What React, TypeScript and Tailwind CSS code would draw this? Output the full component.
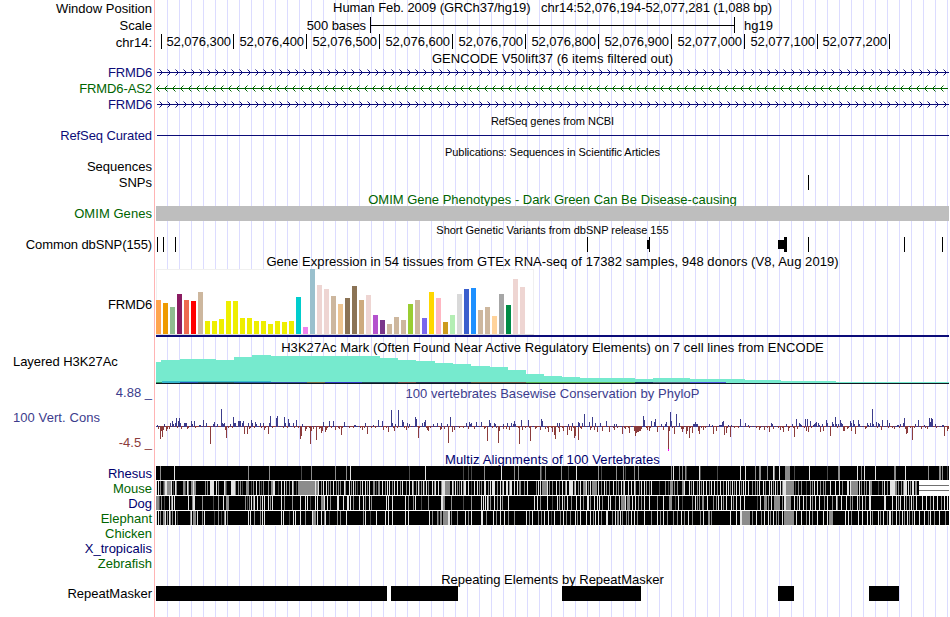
import React from "react";
import clsx from "clsx";

const TRACK_WIDTH = 793;

const ticks = [5, 77, 150, 223, 296, 369, 442, 515, 588, 661, 733];

const positions = [
  "52,076,300", "52,076,400", "52,076,500", "52,076,600", "52,076,700",
  "52,076,800", "52,076,900", "52,077,000", "52,077,100", "52,077,200"
];

// [height, color] per tissue
const tissues: [number, string][] = [
  [34, "#ffa54f"], [31, "#ee9a00"], [27, "#8fbc8f"], [40, "#8b1c62"], [34, "#ee6a50"],
  [33, "#ff0000"], [42, "#cdb79e"], [13, "#eeee00"], [13, "#eeee00"], [15, "#eeee00"],
  [33, "#eeee00"], [33, "#eeee00"], [16, "#eeee00"], [16, "#eeee00"], [13, "#eeee00"],
  [13, "#eeee00"], [10, "#eeee00"], [13, "#eeee00"], [12, "#eeee00"], [13, "#eeee00"],
  [37, "#00cdcd"], [7, "#ee82ee"], [65, "#9ac0cd"], [49, "#eed5d2"], [45, "#eed5d2"],
  [38, "#cdb79e"], [30, "#eec591"], [36, "#8b7355"], [48, "#8b7355"], [34, "#cdaa7d"],
  [39, "#eed5d2"], [19, "#b452cd"], [14, "#7a378b"], [10, "#cdb79e"], [17, "#cdb79e"],
  [14, "#cdb79e"], [30, "#9acd32"], [34, "#cdb79e"], [16, "#7a67ee"], [42, "#ffd700"],
  [36, "#ffb6c1"], [12, "#cd9b1d"], [19, "#b4eeb4"], [40, "#d9d9d9"], [45, "#3a5fcd"],
  [46, "#1e90ff"], [24, "#cdb79e"], [27, "#cdb79e"], [18, "#ffd39b"], [40, "#a6a6a6"],
  [29, "#008b45"], [55, "#eed5d2"], [47, "#eed5d2"]
];

// [x, y] start of every step in the H3K27Ac signal
const histone = [
  [0, 7], [5, 5], [24, 4], [60, 5], [78, 2], [96, 0], [115, 1], [224, 3], [242, 5],
  [260, 6], [279, 8], [297, 9], [315, 11], [334, 12], [352, 15], [370, 19], [388, 21],
  [406, 22], [424, 23], [479, 24], [497, 23], [534, 24], [589, 25], [625, 26], [680, 27]
];

// x:height, height above the zero line
const gains =
  "1:2 8:3 14:4 16:6 17:3 19:4 20:9 22:6 23:9 24:4 28:4 29:4 30:4 35:6 36:3 38:6 43:2 44:2 47:7 50:4 57:3 58:5 61:3 65:18 66:4 67:3 68:4 74:3 77:10 78:4 79:4 82:6 83:6 84:6 86:4 87:6 92:4 95:7 96:4 99:5 100:3 104:4 107:4 113:4 114:11 120:9 121:11 128:10 129:4 132:8 133:4 137:4 140:7 146:3 167:5 173:6 177:6 188:5 198:2 199:2 209:4 217:2 222:7 226:6 235:17 236:4 239:3 242:17 246:7 247:5 251:4 253:3 259:10 260:8 " +
  "266:4 268:5 269:7 277:3 281:4 285:4 291:3 294:10 310:4 313:5 314:3 315:4 320:5 325:5 333:7 334:4 338:4 339:3 347:3 351:4 355:4 357:3 358:6 359:3 365:7 372:7 385:8 386:6 401:4 403:4 412:3 416:4 422:5 423:4 426:4 428:13 433:5 436:10 439:4 444:4 450:6 458:3 460:3 487:11 488:7 495:6 498:5 499:8 505:3 509:3 510:5 514:15 515:6 520:13 523:4 " +
  "537:3 538:3 539:5 540:3 541:3 553:3 556:2 563:2 564:2 565:2 566:5 567:6 572:2 575:2 584:8 589:4 592:2 615:4 616:3 630:3 636:3 640:8 643:4 644:3 645:2 649:8 651:8 654:6 657:2 658:3 659:4 660:5 662:4 663:2 666:3 670:7 671:4 676:5 677:3 679:10 680:3 682:3 684:7 685:4 686:3 694:6 695:4 697:7 698:3 702:7 703:3 711:4 712:2 714:4 716:18 717:3 720:5 722:4 723:3 726:7 731:7 733:4 741:2 742:2 744:3 747:4 748:9 759:3 762:7 768:2 773:9 774:5 775:9 776:8 779:3 786:2 787:2";

const losses =
  "2:3 4:13 5:5 6:11 7:4 10:5 11:3 13:3 25:3 31:3 54:18 69:4 70:12 88:8 91:8 93:3 108:4 112:8 144:13 145:10 149:5 150:3 154:18 155:5 157:3 160:14 163:3 165:7 166:5 169:6 170:4 179:4 183:3 185:9 206:4 211:8 227:4 232:6 238:5 250:4 262:12 " +
  "271:4 272:5 284:4 285:3 288:3 292:17 296:6 298:4 312:3 318:3 328:3 331:15 342:17 343:5 347:3 350:3 353:4 363:18 366:4 374:15 379:3 384:4 389:3 392:6 396:6 398:9 399:13 403:6 407:5 411:9 413:4 415:5 418:12 419:10 422:14 425:3 434:4 438:4 441:6 446:5 453:6 458:4 466:8 469:3 473:7 478:5 479:10 480:7 481:6 482:6 483:5 484:5 485:3 491:4 493:5 501:6 507:4 512:24 513:5 518:8 " +
  "525:3 526:6 527:3 530:8 531:5 533:12 536:7 542:5 543:8 547:4 557:8 560:5 568:9 570:7 574:11 603:4 608:4 613:6 617:3 624:4 627:6 632:5 638:11 641:3 650:5 652:6 664:6 667:5 674:10 687:5 688:5 691:3 695:5 699:8 709:3 725:4 738:3 749:3 750:8 751:7 756:14 765:3 771:3 788:10 791:5 792:3";

// x, shade (w = light, g = gray, d = dark gray) and an optional width
const alignments = [
  "4g 18w 92g 113g 145d 155g 179g 190g 194w 253d 269w 307d 312d 315d 328g 345w 358g 362g 384g 385d 389g 405g 412d 420w 442g 445d 460g 467g 469d 478g 482g 515g 517w 523g 526g 529g 530d 543w 544d 561d 584w 589w 599g 603g2 611g 617w 618g 623w 629g 630g4 638d 653w 671d 682g 683g 701w 705g 708w 719w 738g 739g 749w 772g 783g2 786g 791d",
  "0w 2w 4g 7d 8g 9w2 11g 12g3 15w 17d 19w 20g 27g2 29d 31w 32g 35g2 37w 38g2 49g 51g 54w4 60w 62g 68w 69g 70d 75w4 79g 82g 84g 86d 90g3 95d 97g 100w 103g 105d 107g 112g 115g2 117w2 122d 125w 128w 130g 133g 136w 137g 140d 142g20 159w 162w 165g 167w 170w 172g 174g 177w 180g 182g 184g 188w 189g 193w 195g 197w 199g 201d 204g 206w 209w 211g 213w 217g2 220d 222g2 226w 229g 231w 233w 236g 238w 241w 244g 246w 250g 253w 256w 257g 260g 262w " +
    "263d 265g 267w 268d 270w 272g 276w 278g 279w 282w 285g 286w3 289g5 296w 297g 299w 301g 303g 305w 307g 308w2 312w 315d 318w 321w 323g 325g 328w2 332g 334w 336w3 341g 344w 346g 347w 350w2 353g 354w2 358w 361w 363g2 368g 371w 380g 382w 384w 386g5 391w 393g 396g 400w 403g 406w 409g 410w 413w4 418g 419w 422g 424w 427g3 430w 432g 434w 436g5 442w 445g 448w 450g 453g 457w 460g 462g 465w 467g 468w 472w 475w 478w 479g 483g 485w 488w 490g 493g 495w 503d 509g 512d 514g3 518g 521g " +
    "526g2 528w 533w 535g 537w 541g 543w 545g 547w 550w 553g 555w 558w 561g 564w 567g 570w 572w 574g 576w 578g 580w 583w 585g 587w 589w 592w 596g 599g 601g 603w 607w 609g 613w 615w 617g 619w 621g 624w 626g 627w3 630g8 639d 642g 645g 650d 654g 656g 658w 661w 664g 667g 669g 674w 679w 683w 686g 691w2 694w 695g7 703w 705g 708g 710g 713w 714g2 722d 726g 728w 731g 734w2 736w3 739g2 742g 745g 747g 748w3 752w 754g 756w2 759g2",
  "0g3 3d 5g 8d 13w 15g 16w 18w 32w 36g 37w2 46g 57d 62g 67w 70g3 89g 91d 93g 95w 97g 98w 101w 104g 106w 108w 112w 114g 116w 125w 128g 136g 144w 149w 151w 154d 159w 161w 165g3 168w 171w 174g 181w 182w 187w 191w2 194w 197g 203w 207w 209g 213w 215g 230w 232w 236w 249w 252g 257g 259w " +
    "265d 272g 285w2 287g2 295g 307d 315g 325w 327w 329w 331w 332g 334g 338w 341g 344w 346g 352w 378w 381w 384g 391w 396d 401w 403g 406w 408g 411w 415g 420w 424w 427g 431w2 434g 438w 441w 443w 446g 452w 454w 459g 463w 465g4 469w 471g3 476w 479w 482g 485g 488w 493w 501g 507w 513g3 519d 522w " +
    "526d 536g 539w 541g 543g 546g2 551w 557g 560g 562w 565w 567g 570w 575w 577g 580w 584w 588w 601d 604w 608g3 612g 615w 618g6 626g 628w3 630g5 638w 641g 643w 647w 650g 654w 656g 659w 663w 668g 671w 676g 680w 681g 685w 690w 694g 696g 701w 703g 706w 709g 713w 714w 728w2 736w 740w 742g 744w 748w 750g 753g 755w 757g 760w 766w 770w 774g 777w 781w 785g 788w 791w",
  "0w 2w 4g 7g2 9w 11g 13w 14g 16g 19w 21d 34g 35w 37g3 41w 46g 48w 58d 62g 65d 68g 69w 71g 92w 94w 98g 104g 106w 108w 125w 127w 133d 137w 139w 144w 149g 156w 157g3 161w 165w 168g 169w 173d 181g 184g 190w 207g 209w 214d 220w 229w 232w 236w 249w 252w " +
    "273w 276g 281g 282d 284g2 287g5 292w2 295g 301g 309w 312g 315w 325w 326w 330g 337w 340g 344w 348w 352g 358g 370w 373g 376w 382g 385g 388w 392w 395d 398w 404g 407w 410g 414g 419w 421g 424w 430w 434w 437g 439w 442w 445g 450w2 456g 459w 461g2 464w 466g 470g 472g 475w 478w 481g 488w 495g 501w 504g 507w 511g 517g 521g " +
    "525w 528g 532w 536g 544g 547w 552g2 555g 574w 580w 584w2 586g8 596g 600w 605g 608w 612w 614g 617w 620g 622g 626w 628g3 631g7 640w 645w 650g 653w 656g 661w 667w 671w 673g3 676g 689w 692w 695g 702w 706w 711w 714w 716g 722w 724g 727w 731g 733w2 736g 740w 743g 746w 748g 751w 753g 756g 758w 763w 768w 772g 774w 778g 783w 789g"
];

const shades: Record<string, string> = { w: "#e4e4e4", g: "#8c8c8c", d: "#484848" };

function parseBars(data: string) {
  const bars = new Map<number, number>();
  data.split(" ").forEach((item) => {
    const [x, h] = item.split(":").map(Number);
    bars.set(x, h);
  });
  return bars;
}

function Label({ className, children }: { className?: string; children?: React.ReactNode }) {
  return (
    <div className={clsx("shrink-0 flex items-center justify-end", className)}>
      <span>{children}</span>
    </div>
  );
}

function Title({ className, children }: { className?: string; children?: React.ReactNode }) {
  return (
    <div className={clsx("shrink-0 flex items-center justify-center", className)}>
      <span>{children}</span>
    </div>
  );
}

function Intron({ left = false }: { left?: boolean }) {
  const color = left ? "#006400" : "#0c0c78";
  const arrows = Array.from({ length: 99 }, (_, i) =>
    left ? `M${i * 8 + 3.5} 5.5l-3 3l3 3` : `M${i * 8 + 3.5} 5.5l3 3l-3 3`
  ).join("");

  return (
    <svg width={TRACK_WIDTH} height={16} className="block shrink-0">
      <rect x={left ? 0 : 1} y={8} width={792} height={1} fill={color} />
      <path d={arrows} fill="none" stroke={color} strokeWidth={1} />
    </svg>
  );
}

function Expression() {
  return (
    <svg width={TRACK_WIDTH} height={68} className="block shrink-0" shapeRendering="crispEdges">
      <rect width={378} height={66} fill="#f0f0f0" />
      <rect x={1} y={1} width={376} height={64} fill="#fff" />
      <rect y={65} width={378} height={1} fill="#dcdcdc" />
      {tissues.map(([h, color], i) => (
        <rect key={i} x={i * 7} y={65 - h} width={5} height={h} fill={color} />
      ))}
      <rect y={66} width={TRACK_WIDTH} height={2} fill="#0c0c78" />
    </svg>
  );
}

function Histone() {
  const d = histone
    .map(([x, y], i) => `${i === 0 ? `M0 28V${y}` : `V${y}`}H${histone[i + 1]?.[0] ?? TRACK_WIDTH}`)
    .join("");

  return (
    <svg width={TRACK_WIDTH} height={29} className="block shrink-0" shapeRendering="crispEdges">
      <path d={`${d}V28Z`} fill="#76eace" />
      <rect x={6} y={26} width={109} height={1} fill="#38c0cc" />
      <rect y={27} width={6} height={1} fill="#2f9a68" />
      <rect x={6} y={27} width={18} height={1} fill="#38b0cc" />
      <rect x={24} y={27} width={18} height={1} fill="#2850b0" />
      <rect x={42} y={27} width={36} height={1} fill="#285868" />
      <rect x={78} y={27} width={37} height={1} fill="#2458a0" />
      <rect x={115} y={27} width={36} height={1} fill="#3048a0" />
      <rect x={151} y={27} width={18} height={1} fill="#786848" />
      <rect x={169} y={27} width={37} height={1} fill="#3038c0" />
      <rect x={206} y={27} width={36} height={1} fill="#244858" />
      <rect x={242} y={27} width={18} height={1} fill="#784848" />
      <rect x={260} y={27} width={55} height={1} fill="#303050" />
      <rect x={315} y={27} width={55} height={1} fill="#705840" />
      <rect x={370} y={27} width={109} height={1} fill="#58b050" />
      <rect x={479} y={27} width={18} height={1} fill="#203868" />
      <rect x={497} y={27} width={37} height={1} fill="#506880" />
      <rect x={534} y={27} width={36} height={1} fill="#4858d8" />
      <rect y={28} width={TRACK_WIDTH} height={1} fill="#101820" />
    </svg>
  );
}

function Conservation() {
  const up = parseBars(gains);
  const down = parseBars(losses);
  let above = "";
  let below = "";

  for (let x = 0; x < TRACK_WIDTH; x++) {
    const noise = (x * 7919 + x * x * 31) % 11;
    const u = up.get(x) ?? (down.has(x) ? 0 : noise < 4 ? 1 : noise === 4 ? 2 : 0);
    const v = down.get(x) ?? (up.has(x) || noise < 2 ? 0 : noise > 8 ? 2 : 1);
    if (u) above += `M${x} 23v${-u}h1v${u}z`;
    if (v) below += `M${x} 22v${v}h1v${-v}z`;
  }

  return (
    <svg width={TRACK_WIDTH} height={50} className="block shrink-0" shapeRendering="crispEdges">
      <path d={below} fill="#8c3c3c" />
      <path d={above} fill="#3c3c8c" />
      <rect x={512} y={45} width={1} height={2} fill="#ff00ff" />
    </svg>
  );
}

function Alignment({ data, gap = false }: { data: string; gap?: boolean }) {
  return (
    <div className="shrink-0 h-[15px] border-b border-white">
      <svg width={TRACK_WIDTH} height={14} className="block" shapeRendering="crispEdges">
        <rect width={gap ? 763 : TRACK_WIDTH} height={14} fill="#000" />
        {data.split(" ").map((item, i) => {
          const [, x, shade, w] = item.match(/(\d+)([wgd])(\d*)/)!;
          return <rect key={i} x={x} width={w || 1} height={14} fill={shades[shade]} />;
        })}
        {gap && (
          <>
            <rect x={763} width={30} height={14} fill="#fff" />
            <rect x={763} y={4} width={30} height={1} fill="#707070" />
            <rect x={763} y={9} width={30} height={1} fill="#707070" />
          </>
        )}
      </svg>
    </div>
  );
}

export default function GenomeBrowser() {
  return (
    <div className="flex w-[950px] h-[617px] overflow-hidden bg-white font-['Liberation_Sans',Arial,sans-serif] text-[13px] leading-none whitespace-pre text-black">

      {/* LABELS */}
      <div className="w-[155px] shrink-0 flex flex-col pr-[2px] border-r border-[#ffb4b4]">
        <Label className="h-[17px]">Window Position</Label>
        <Label className="h-[17px]">Scale</Label>
        <Label className="h-[17px]">chr14:</Label>
        <Label className="h-[16px] mt-[13px] text-[#0c0c78] tracking-[-0.15px]">FRMD6</Label>
        <Label className="h-[16px] text-[#006400] tracking-[-0.1px]">FRMD6-AS2</Label>
        <Label className="h-[16px] text-[#0c0c78] tracking-[-0.15px]">FRMD6</Label>
        <Label className="h-[15px] mt-4 text-[#0c0c78] tracking-[-0.1px]">RefSeq Curated</Label>
        <Label className="h-[16px] mt-[15px]">Sequences</Label>
        <Label className="h-[16px]">SNPs</Label>
        <Label className="h-[15px] mt-4 text-[#006400] tracking-[0.05px]">OMIM Genes</Label>
        <Label className="h-[15px] mt-4 tracking-[-0.1px]">Common dbSNP(155)</Label>
        <Label className="h-[16px] mt-[44px] tracking-[-0.15px]">FRMD6</Label>
        <div className="h-[16px] mt-[41px] pl-[13px] flex items-center tracking-[-0.05px]">Layered H3K27Ac</div>
        <Label className="h-[16px] mt-[15px] text-[#3c3c8c]">4.88 _</Label>
        <div className="h-[16px] mt-[9px] pl-[13px] flex items-center text-[#3c3c8c] tracking-[0.08px]">100 Vert. Cons</div>
        <Label className="h-[16px] mt-[9px] text-[#8c3c3c]">-4.5 _</Label>
        <Label className="h-[15px] mt-[16px] text-[#00006e]">Rhesus</Label>
        <Label className="h-[15px] text-[#006400]">Mouse</Label>
        <Label className="h-[15px] text-[#00006e]">Dog</Label>
        <Label className="h-[15px] text-[#006400]">Elephant</Label>
        <Label className="h-[15px] text-[#006400]">Chicken</Label>
        <Label className="h-[15px] text-[#00006e]">X_tropicalis</Label>
        <Label className="h-[15px] text-[#006400]">Zebrafish</Label>
        <Label className="h-[15px] mt-[15px]">RepeatMasker</Label>
      </div>

      {/* TRACKS */}
      <div className="ml-px w-[793px] shrink-0 flex flex-col bg-[linear-gradient(to_right,#dcdcff_1px,transparent_1px)] bg-[length:12px_617px] bg-[position:11px_0] bg-repeat-x">
        <Title className="h-[16px] pb-[2px] tracking-[-0.07px]">Human Feb. 2009 (GRCh37/hg19)   chr14:52,076,194-52,077,281 (1,088 bp)</Title>

        <div className="h-[18px] shrink-0 flex items-center">
          <span className="w-[214px] pr-[4px] text-right tracking-[-0.07px]">500 bases</span>
          <div className="w-[365px] h-[16px] border-x border-black flex items-center">
            <div className="w-full h-px bg-black" />
          </div>
          <span className="pl-[9px]">hg19</span>
        </div>

        {/* ruler */}
        <div className="h-[17px] shrink-0 flex items-start pl-[5px]">
          <div className="w-px h-[15px] bg-black" />
          {positions.map((p, i) => (
            <div
              key={p}
              className="h-[15px] shrink-0 flex items-center justify-end border-r border-black pr-[2px] tracking-[-0.05px]"
              style={{ width: ticks[i + 1] - ticks[i] }}
            >
              {p}
            </div>
          ))}
        </div>

        <Title className="h-[13px] pt-px tracking-[0.07px]">GENCODE V50lift37 (6 items filtered out)</Title>
        <Intron />
        <Intron left />
        <Intron />

        <Title className="h-[16px] text-[11px] pt-[3px] tracking-[-0.04px]">RefSeq genes from NCBI</Title>
        <div className="h-[16px] shrink-0 pt-[7px] pl-px">
          <div className="h-px bg-[#0c0c78]" />
        </div>

        <Title className="h-[15px] text-[11px] pt-px tracking-[-0.06px]">Publications: Sequences in Scientific Articles</Title>
        <div className="h-[32px] shrink-0 pt-4 pl-[652px]">
          <div className="w-px h-[15px] bg-black" />
        </div>

        <Title className="h-[15px] pt-px text-[#006400]">OMIM Gene Phenotypes - Dark Green Can Be Disease-causing</Title>
        <div className="h-[15px] shrink-0 bg-[#bebebe]" />

        <Title className="h-[16px] text-[11px] pt-[3px] tracking-[-0.02px]">Short Genetic Variants from dbSNP release 155</Title>
        <svg width={TRACK_WIDTH} height={15} className="block shrink-0" shapeRendering="crispEdges">
          {[1, 7, 19, 431, 493, 652, 748, 786].map((x) => (
            <rect key={x} x={x} width={1} height={15} />
          ))}
          <rect x={491} y={3} width={2} height={9} />
          <rect x={622} y={3} width={6} height={9} />
          <rect x={628} width={3} height={15} />
        </svg>

        <Title className="h-[17px] pt-[2px] tracking-[0.055px]">Gene Expression in 54 tissues from GTEx RNA-seq of 17382 samples, 948 donors (V8, Aug 2019)</Title>
        <Expression />

        <Title className="h-[18px] pt-[2px] tracking-[0.06px]">H3K27Ac Mark (Often Found Near Active Regulatory Elements) on 7 cell lines from ENCODE</Title>
        <Histone />

        <Title className="h-[20px] pb-[2px] text-[#3c3c8c] tracking-[0.04px]">100 vertebrates Basewise Conservation by PhyloP</Title>
        <Conservation />
        <Title className="h-[12px] pb-[2px] text-[#00006e] tracking-[0.11px]">Multiz Alignments of 100 Vertebrates</Title>
        {alignments.map((data, i) => (
          <Alignment key={i} data={data} gap={i === 1} />
        ))}

        <Title className="h-[15px] mt-[45px] pt-[2px]">Repeating Elements by RepeatMasker</Title>
        <div className="h-[15px] shrink-0 flex">
          <div className="w-[231px] bg-black" />
          <div className="w-[67px] ml-[4px] bg-black" />
          <div className="w-[79px] ml-[104px] bg-black" />
          <div className="w-[16px] ml-[137px] bg-black" />
          <div className="w-[30px] ml-[75px] bg-black" />
        </div>
      </div>
    </div>
  );
}
